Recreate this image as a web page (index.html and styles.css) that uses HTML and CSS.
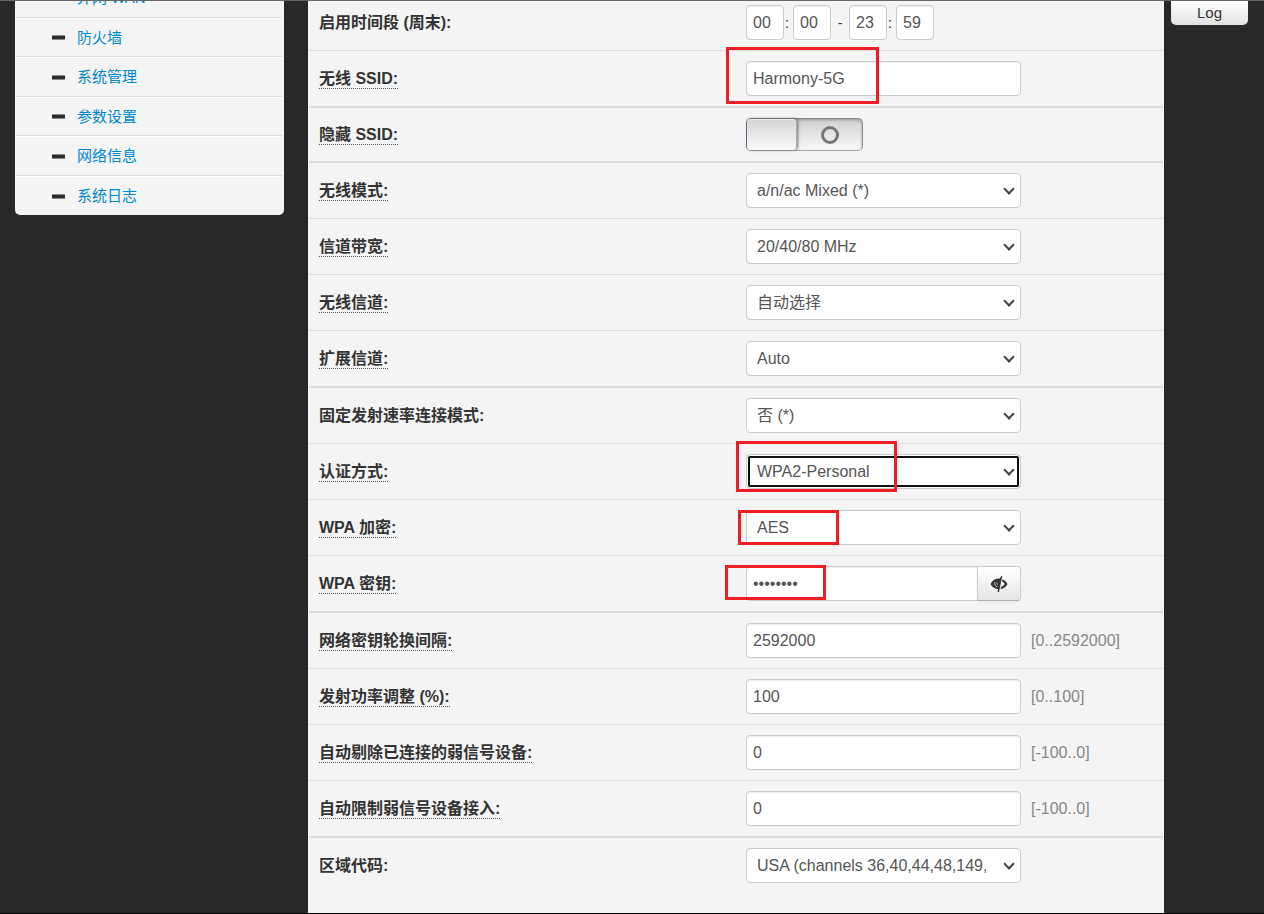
FILE: index.html
```html
<!DOCTYPE html>
<html lang="zh-CN">
<head>
<meta charset="utf-8">
<meta name="viewport" content="width=device-width, initial-scale=1">
<title>无线 5GHz</title>
<link rel="stylesheet" href="styles.css">
</head>
<body>
<div class="page">
  <nav class="sidebar">
    <ul class="menu">
      <li><span class="dash"></span><a href="#">外网 WAN</a></li>
      <li><span class="dash"></span><a href="#">防火墙</a></li>
      <li><span class="dash"></span><a href="#">系统管理</a></li>
      <li><span class="dash"></span><a href="#">参数设置</a></li>
      <li><span class="dash"></span><a href="#">网络信息</a></li>
      <li><span class="dash"></span><a href="#">系统日志</a></li>
    </ul>
  </nav>
  <main class="panel">
    <form class="settings">
      <div class="row">
        <div class="name"><label for="h1">启用时间段 (周末):</label></div>
        <div class="control">
          <input class="field time" id="h1" type="text" value="00"><span class="colon">:</span><input class="field time" type="text" value="00" aria-label="开始分钟"><span class="to">-</span><input class="field time" type="text" value="23" aria-label="结束小时"><span class="colon">:</span><input class="field time" type="text" value="59" aria-label="结束分钟">
        </div>
      </div>
      <div class="row">
        <div class="name"><label class="help" for="ssid">无线 SSID:</label></div>
        <div class="control"><input class="field" id="ssid" type="text" value="Harmony-5G"><span class="mark mark-ssid"></span></div>
      </div>
      <div class="row thick">
        <div class="name"><label class="help" for="hide">隐藏 SSID:</label></div>
        <div class="control"><input class="switch" id="hide" type="checkbox"></div>
      </div>
      <div class="row thick">
        <div class="name"><label class="help" for="mode">无线模式:</label></div>
        <div class="control"><span class="select"><select class="field" id="mode"><option>a/n/ac Mixed (*)</option></select></span></div>
      </div>
      <div class="row">
        <div class="name"><label class="help" for="bw">信道带宽:</label></div>
        <div class="control"><span class="select"><select class="field" id="bw"><option>20/40/80 MHz</option></select></span></div>
      </div>
      <div class="row">
        <div class="name"><label class="help" for="ch">无线信道:</label></div>
        <div class="control"><span class="select"><select class="field" id="ch"><option>自动选择</option></select></span></div>
      </div>
      <div class="row">
        <div class="name"><label class="help" for="ext">扩展信道:</label></div>
        <div class="control"><span class="select"><select class="field" id="ext"><option>Auto</option></select></span></div>
      </div>
      <div class="row thick">
        <div class="name"><label for="rate">固定发射速率连接模式:</label></div>
        <div class="control"><span class="select"><select class="field" id="rate"><option>否 (*)</option></select></span></div>
      </div>
      <div class="row">
        <div class="name"><label class="help" for="auth">认证方式:</label></div>
        <div class="control"><span class="select"><select class="field active" id="auth"><option>WPA2-Personal</option></select></span><span class="mark mark-auth"></span></div>
      </div>
      <div class="row">
        <div class="name"><label class="help" for="enc">WPA 加密:</label></div>
        <div class="control"><span class="select"><select class="field" id="enc"><option>AES</option></select></span><span class="mark mark-enc"></span></div>
      </div>
      <div class="row">
        <div class="name"><label class="help" for="key">WPA 密钥:</label></div>
        <div class="control">
          <div class="group">
            <input class="field" id="key" type="password" value="12345678">
            <button class="reveal" type="button" aria-label="显示密钥">
              <svg width="18" height="18" viewBox="0 0 18 18" aria-hidden="true">
                <path d="M0.500 9C2.500 5 6 3.300 9.800 3.600L11.300 1H12.300L9 17H7.500L8 14.200C4.500 13.600 2 11.800 0.500 9Z" fill="#333"/>
                <path d="M12.600 4.200C14.800 5.200 16.500 7 17.500 9C16 11.700 13.500 13.700 10.600 14.200L11.200 11.800C13 11 14.300 9.900 14.800 8.900C14.200 7.900 13.300 7 12.100 6.400Z" fill="#333"/>
                <path d="M4.800 7C4.200 9.300 5.400 11.300 7.400 11.900M7 7.600C6.700 8.600 7 9.300 7.900 9.600" fill="none" stroke="#ddd" stroke-width="0.800"/>
              </svg>
            </button>
          </div>
          <span class="mark mark-key"></span>
        </div>
      </div>
      <div class="row thick">
        <div class="name"><label class="help" for="rekey">网络密钥轮换间隔:</label></div>
        <div class="control"><input class="field" id="rekey" type="text" value="2592000"><span class="hint">[0..2592000]</span></div>
      </div>
      <div class="row">
        <div class="name"><label class="help" for="power">发射功率调整 (%):</label></div>
        <div class="control"><input class="field" id="power" type="text" value="100"><span class="hint">[0..100]</span></div>
      </div>
      <div class="row">
        <div class="name"><label class="help" for="kick">自动剔除已连接的弱信号设备:</label></div>
        <div class="control"><input class="field" id="kick" type="text" value="0"><span class="hint">[-100..0]</span></div>
      </div>
      <div class="row">
        <div class="name"><label class="help" for="limit">自动限制弱信号设备接入:</label></div>
        <div class="control"><input class="field" id="limit" type="text" value="0"><span class="hint">[-100..0]</span></div>
      </div>
      <div class="row thick">
        <div class="name"><label for="region">区域代码:</label></div>
        <div class="control"><span class="select"><select class="field" id="region"><option>USA (channels 36,40,44,48,149,153,157,161,165)</option></select></span></div>
      </div>
    </form>
  </main>
  <aside class="tools"><button class="log" type="button">Log</button></aside>
</div>
</body>
</html>
```

FILE: styles.css
```css
*,
*::before,
*::after {
  box-sizing: border-box;
}

body {
  margin: 0;
  background: #282828;
  color: #333;
  font: 16px/20px "Liberation Sans", "Noto Sans CJK SC", sans-serif;
}

.page {
  display: flex;
  align-items: flex-start;
  min-height: 100vh;
  padding-left: 15px;
  border-top: 1px solid #666;
  border-bottom: 1px solid #000;
  overflow: hidden;
}

/* Side menu */
.sidebar {
  flex: none;
  width: 269px;
  margin-right: 24px;
}

.menu {
  margin: -23px 0 0;
  padding: 0 2px 0 1px;
  list-style: none;
  background: #f4f4f4;
  border-radius: 0 0 5px 5px;
}

.menu li {
  display: flex;
  align-items: center;
  height: 40px;
  padding-left: 36px;
  border-top: 1px solid #fff;
  border-bottom: 1px solid #dcdcdc;
}

.menu li:nth-child(even) {
  height: 39px;
}

.menu li:last-child {
  height: 39px;
  border-bottom: 0;
}

.dash {
  width: 13px;
  height: 5px;
  margin-right: 12px;
  background: #2b2b2b;
  border: 1px solid #888;
  border-width: 1px 0;
  border-radius: 1px;
}

.menu a {
  color: #0088cc;
  font-size: 15px;
  text-decoration: none;
}

/* Settings */
.panel {
  flex: 1;
  align-self: stretch;
  min-width: 0;
  padding: 0 1px;
  background: #f4f4f4;
}

.row {
  display: grid;
  grid-template-columns: 1fr 1fr;
  align-items: center;
  padding: 10px 0;
  border-top: 1px solid #dcdcdc;
}

.row:first-child {
  padding-top: 4px;
  border-top: 0;
}

.row.thick {
  border-top-width: 2px;
}

.name {
  padding-left: 10px;
  font-weight: bold;
}

.name label {
  display: inline-block;
  height: 21px;
  line-height: 22px;
  vertical-align: top;
}

.help {
  border-bottom: 1px dotted #555;
}

.control {
  position: relative;
  display: flex;
  align-items: center;
  margin-left: 10px;
}

.field {
  width: 275px;
  height: 35px;
  margin: 0;
  padding: 4px 6px;
  color: #555;
  font: inherit;
  background-color: #fff;
  border: 1px solid #ccc;
  border-radius: 4px;
}

input.field {
  box-shadow: inset 0 1px 1px rgba(0, 0, 0, 0.07);
}

.field.time {
  width: 38px;
}

.colon,
.to {
  width: 9px;
  text-align: center;
  font-size: 14px;
}

.colon {
  padding-right: 3px;
}

.to {
  width: 18px;
}

.select {
  position: relative;
  display: flex;
}

.select .field {
  appearance: none;
  padding: 4px 34px 4px 10px;
}

.select::after {
  content: "";
  position: absolute;
  top: 12px;
  right: 8px;
  width: 8px;
  height: 8px;
  border: solid #444;
  border-width: 0 2px 2px 0;
  transform: rotate(45deg);
  pointer-events: none;
}

.field.active {
  box-shadow: inset 0 0 0 1px #fff, inset 0 0 0 3px #101010;
}

.hint {
  margin-left: 10px;
  color: #888;
}

.group {
  display: flex;
  width: 275px;
}

.group .field {
  flex: 1;
  min-width: 0;
  border-radius: 4px 0 0 4px;
}

.reveal {
  display: flex;
  align-items: center;
  justify-content: center;
  width: 44px;
  margin-left: -1px;
  padding: 0;
  background: linear-gradient(#fff, #e6e6e6);
  border: 1px solid #ccc;
  border-bottom-color: #b3b3b3;
  border-radius: 0 4px 4px 0;
  box-shadow: 0 1px 2px rgba(0, 0, 0, 0.05);
}

.switch {
  appearance: none;
  display: flex;
  width: 117px;
  height: 33px;
  margin: 0;
  background: linear-gradient(#d0d0d0, #fafafa);
  border: 1px solid #888;
  border-bottom-color: #aaa;
  border-left-color: #5a7090;
  border-radius: 5px;
  box-shadow: inset 0 1px 3px rgba(0, 0, 0, 0.3);
}

.switch::before {
  content: "";
  width: 50px;
  background: linear-gradient(#d4d4d4, #fafafa);
  border-right: 1px solid #aaa;
  border-radius: 4px;
  box-shadow: 1px 0 3px rgba(0, 0, 0, 0.5), inset 0 1px 1px #eee;
}

.switch::after {
  content: "";
  width: 18px;
  height: 18px;
  margin: auto;
  border: 3px solid #777;
  border-radius: 50%;
}

/* Red callout frames over the fields */
.mark {
  position: absolute;
  border: 3px solid #ee1c24;
  pointer-events: none;
}

.mark-ssid {
  top: -14px;
  left: -20px;
  width: 153px;
  height: 57px;
}

.mark-auth {
  top: -13px;
  left: -10px;
  width: 161px;
  height: 51px;
}

.mark-enc {
  top: 0;
  left: -8px;
  width: 101px;
  height: 35px;
}

.mark-key {
  top: -1px;
  left: -21px;
  width: 101px;
  height: 35px;
}

/* Right tools */
.tools {
  flex: none;
  width: 100px;
  padding: 0 16px 0 7px;
}

.log {
  width: 100%;
  height: 24px;
  padding: 0;
  color: #333;
  font: 15px/20px "Liberation Sans", sans-serif;
  background: linear-gradient(#fff, #e2e2e2);
  border: 0;
  border-radius: 0 0 5px 5px;
}
```
